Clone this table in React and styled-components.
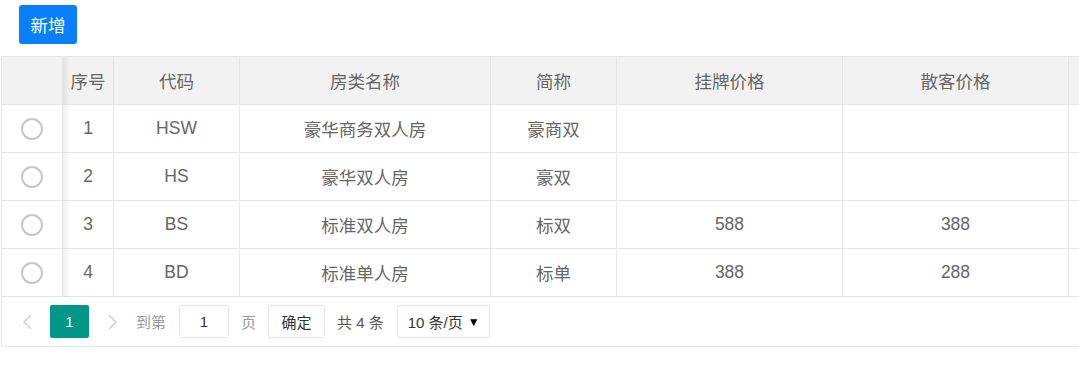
import React from "react";
import styled, { createGlobalStyle } from "styled-components";

const GlobalStyle = createGlobalStyle`
  body {
    margin: 0;
    background: #fff;
    overflow: hidden;
    font-family: "Liberation Sans", "Noto Sans CJK SC", sans-serif;
  }
`;

const Page = styled.div`
  width: 1079px;
  height: 369px;
  overflow: hidden;
`;

const Toolbar = styled.div`
  display: flex;
  align-items: flex-start;
  padding: 5px 0 0 19px;
  height: 56px;
  box-sizing: border-box;
`;

const AddButton = styled.button`
  height: 39px;
  width: 58px;
  border: none;
  border-radius: 3px;
  background: #0a7ffb;
  color: #fff;
  font-family: inherit;
  font-size: 17.5px;
  padding: 0;
  cursor: pointer;
`;

const TableBox = styled.div`
  margin-left: 1px;
  width: 1400px;
  border: 1px solid #e6e6e6;
  border-right: none;
`;

const Table = styled.table`
  border-collapse: separate;
  border-spacing: 0;
  table-layout: fixed;
  width: ${(p) => p.$width}px;
`;

const Cell = styled.td`
  height: 48px;
  box-sizing: border-box;
  padding: 0;
  border-right: 1px solid #e6e6e6;
  border-bottom: 1px solid #e6e6e6;
  text-align: center;
  font-size: 17.5px;
  color: #666;
  background: ${(p) => (p.$head ? "#f2f2f2" : "#fff")};
  position: ${(p) => (p.$fixed ? "relative" : "static")};
  font-weight: normal;

  ${(p) =>
    p.$fixed &&
    `
    &::after {
      content: "";
      position: absolute;
      top: 0;
      bottom: -1px;
      right: -9px;
      width: 8px;
      background: linear-gradient(to right, rgba(0,0,0,0.06), rgba(0,0,0,0));
      pointer-events: none;
      z-index: 1;
    }
  `}
`;

const Radio = styled.span`
  display: inline-block;
  width: 22px;
  height: 22px;
  box-sizing: border-box;
  border: 2px solid #c6c6c6;
  border-radius: 50%;
  vertical-align: middle;
`;

const Pager = styled.div`
  display: flex;
  align-items: center;
  height: 49px;
  padding-left: 15px;
  box-sizing: border-box;
  font-size: 15px;
`;

const Arrow = styled.span`
  display: flex;
  align-items: center;
  justify-content: center;
  width: 21px;
  height: 33px;
  margin: ${(p) => p.$m || "0"};
`;

const PageNum = styled.span`
  display: flex;
  align-items: center;
  justify-content: center;
  width: 39px;
  height: 33px;
  border-radius: 2px;
  background: #009688;
  color: #fff;
`;

const Label = styled.span`
  color: ${(p) => p.$color || "#999"};
  margin: ${(p) => p.$m || "0"};
  white-space: pre;
`;

const Box = styled.span`
  display: flex;
  align-items: center;
  justify-content: ${(p) => p.$justify || "center"};
  box-sizing: border-box;
  width: ${(p) => p.$w}px;
  height: 33px;
  border: 1px solid #e6e6e6;
  border-radius: 2px;
  color: #333;
  padding: ${(p) => p.$pad || "0"};
  white-space: pre;
`;

const Caret = styled.span`
  font-size: 12px;
  color: #000;
`;

const widths = [61, 51, 126, 251, 126, 226, 226, 226];
const heads = ["", "序号", "代码", "房类名称", "简称", "挂牌价格", "散客价格", ""];

const rows = [
  ["1", "HSW", "豪华商务双人房", "豪商双", "", "", ""],
  ["2", "HS", "豪华双人房", "豪双", "", "", ""],
  ["3", "BS", "标准双人房", "标双", "588", "388", ""],
  ["4", "BD", "标准单人房", "标单", "388", "288", ""],
];

const Chevron = ({ dir }) => (
  <svg width="11" height="16" viewBox="0 0 11 16">
    <path
      d={dir === "left" ? "M9 1 L2 8 L9 15" : "M2 1 L9 8 L2 15"}
      fill="none"
      stroke="#d2d2d2"
      strokeWidth="1.6"
    />
  </svg>
);

export default function App() {
  const total = widths.reduce((a, b) => a + b, 0);
  return (
    <Page>
      <GlobalStyle />
      <Toolbar>
        <AddButton>新增</AddButton>
      </Toolbar>
      <TableBox>
        <Table $width={total}>
          <colgroup>
            {widths.map((w, i) => (
              <col key={i} style={{ width: w }} />
            ))}
          </colgroup>
          <thead>
            <tr>
              {heads.map((h, i) => (
                <Cell as="th" key={i} $head $fixed={i === 0}>
                  {h}
                </Cell>
              ))}
            </tr>
          </thead>
          <tbody>
            {rows.map((r) => (
              <tr key={r[0]}>
                <Cell $fixed>
                  <Radio />
                </Cell>
                {r.map((v, i) => (
                  <Cell key={i}>{v}</Cell>
                ))}
              </tr>
            ))}
          </tbody>
        </Table>
        <Pager>
          <Arrow $m="0 12px 0 0">
            <Chevron dir="left" />
          </Arrow>
          <PageNum>1</PageNum>
          <Arrow $m="0 0 0 13px">
            <Chevron dir="right" />
          </Arrow>
          <Label $m="0 13px 0 13px">到第</Label>
          <Box $w={50}>1</Box>
          <Label $m="0 12px 0 12px">页</Label>
          <Box $w={57}>确定</Box>
          <Label $color="#555" $m="0 13px 0 12px">共 4 条</Label>
          <Box $w={93} $justify="space-between" $pad="0 9px 0 10px">
            10 条/页<Caret>▼</Caret>
          </Box>
        </Pager>
      </TableBox>
    </Page>
  );
}
